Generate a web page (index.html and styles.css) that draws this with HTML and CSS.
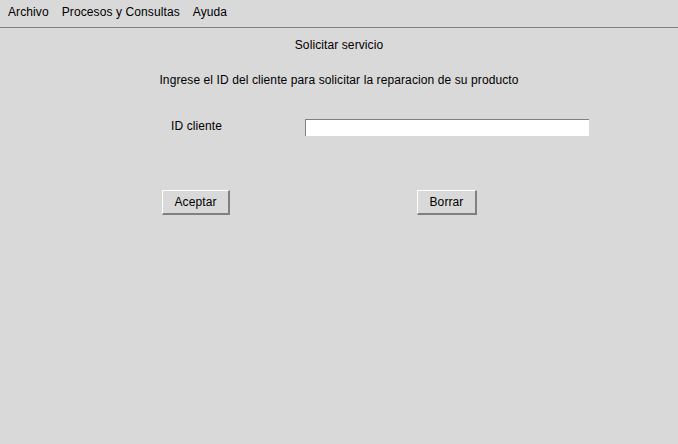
FILE: index.html
```html
<!DOCTYPE html>
<html>
<head>
<meta charset="utf-8">
<link rel="stylesheet" href="styles.css">
</head>
<body>
<div class="menubar">
  <span class="menu-item">Archivo</span>
  <span class="menu-item">Procesos y Consultas</span>
  <span class="menu-item">Ayuda</span>
</div>
<div class="content">
  <div class="title">Solicitar servicio</div>
  <div class="subtitle">Ingrese el ID del cliente para solicitar la reparacion de su producto</div>
  <div class="field-row">
    <label class="field-label">ID cliente</label>
    <div class="text-field"></div>
  </div>
  <div class="button-row">
    <button class="btn btn-accept">Aceptar</button>
    <button class="btn btn-clear">Borrar</button>
  </div>
</div>
</body>
</html>
```

FILE: styles.css
```css
html, body {
  margin: 0;
  padding: 0;
  background: #d9d9d9;
  width: 678px;
  height: 444px;
  overflow: hidden;
  font-family: "Liberation Sans", Arial, sans-serif;
  font-size: 12px;
  line-height: 14px;
  letter-spacing: 0.1px;
  color: #000;
}
.menubar {
  display: flex;
  height: 28px;
  padding: 5px 0 0 1.5px;
  box-sizing: border-box;
  border-bottom: 1px solid #808080;
}
.menu-item {
  padding: 0 6.5px;
}
.content {
  display: flex;
  flex-direction: column;
}
.title {
  margin-top: 10px;
  text-align: center;
}
.subtitle {
  margin-top: 21px;
  text-align: center;
}
.field-row {
  margin-top: 32px;
  display: flex;
  align-items: flex-start;
  padding-left: 171px;
}
.field-label {
  width: 134px;
}
.text-field {
  width: 284px;
  height: 17px;
  box-sizing: border-box;
  background: #fff;
  border-top: 1px solid #808080;
  border-left: 1px solid #808080;
}
.button-row {
  margin-top: 54px;
  display: flex;
  padding-left: 162px;
  gap: 187px;
}
.btn {
  font-family: inherit;
  font-size: 12px;
  line-height: 14px;
  letter-spacing: 0.1px;
  color: #000;
  background: #d9d9d9;
  height: 25px;
  padding: 0;
  box-sizing: border-box;
  border-top: 1px solid #fff;
  border-left: 1px solid #fff;
  border-right: 2px solid #808080;
  border-bottom: 2px solid #808080;
}
.btn-accept { width: 68px; }
.btn-clear { width: 60px; }
```
